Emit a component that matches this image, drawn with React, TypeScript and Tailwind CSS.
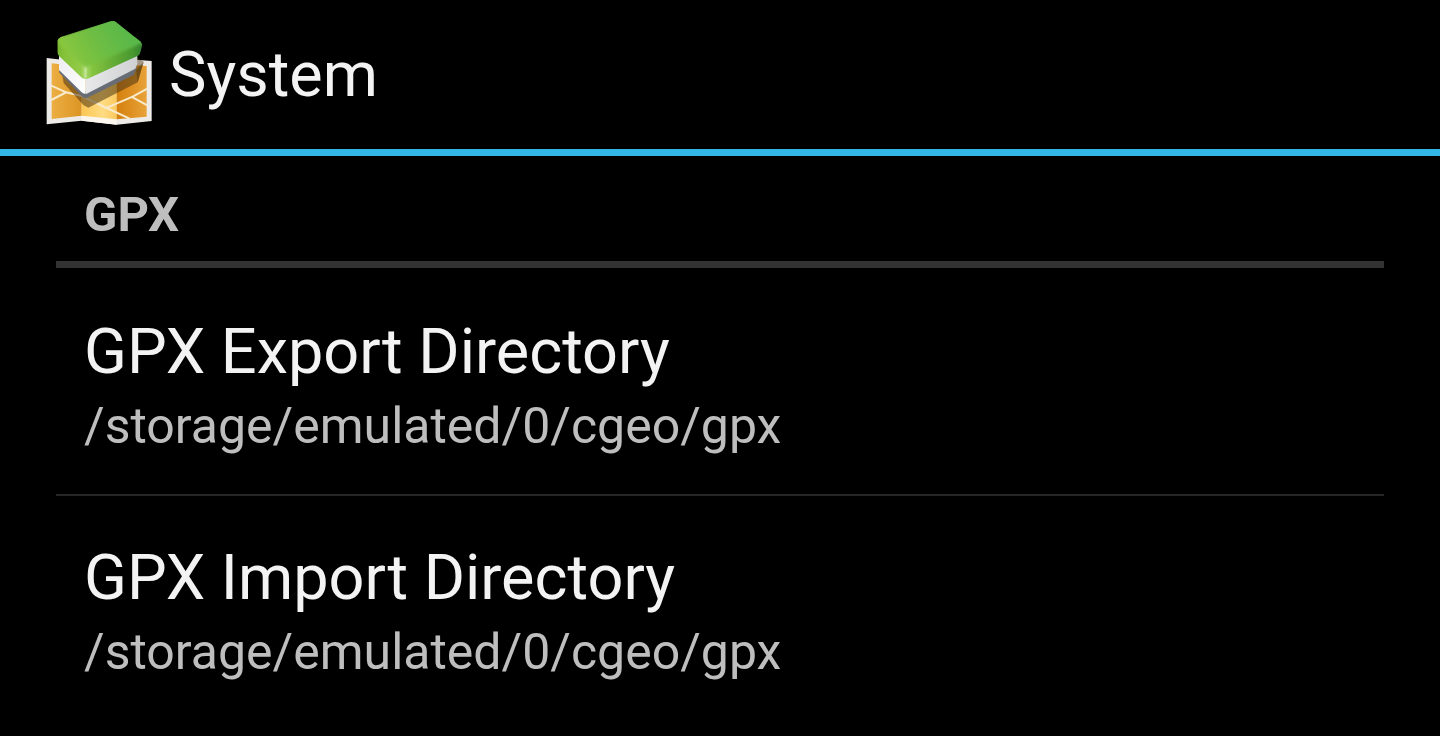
const directories = [
  { title: "GPX Export Directory", path: "/storage/emulated/0/cgeo/gpx" },
  { title: "GPX Import Directory", path: "/storage/emulated/0/cgeo/gpx" },
];

function AppIcon() {
  return (
    <svg viewBox="30 12 330 363" className="h-[121px] w-[110px] shrink-0" aria-hidden="true">
      <defs>
        <linearGradient id="mapLeft" x1="0" y1="0" x2="1" y2="0">
          <stop offset="0" stopColor="#ecae42" />
          <stop offset="1" stopColor="#dc9524" />
        </linearGradient>
        <linearGradient id="mapMid" x1="0" y1="0" x2="1" y2="0">
          <stop offset="0" stopColor="#fbc652" />
          <stop offset="0.6" stopColor="#ffdc82" />
          <stop offset="1" stopColor="#fac95e" />
        </linearGradient>
        <linearGradient id="mapRight" x1="0" y1="0" x2="1" y2="0">
          <stop offset="0" stopColor="#d5800f" />
          <stop offset="1" stopColor="#e8a238" />
        </linearGradient>
        <linearGradient id="lidTop" gradientUnits="userSpaceOnUse" x1="90" y1="150" x2="260" y2="50">
          <stop offset="0" stopColor="#8cc83d" />
          <stop offset="0.5" stopColor="#70be43" />
          <stop offset="1" stopColor="#5ab848" />
        </linearGradient>
        <linearGradient id="lidLeft" x1="0" y1="0" x2="1" y2="0">
          <stop offset="0" stopColor="#74b32c" />
          <stop offset="0.25" stopColor="#84c139" />
          <stop offset="0.85" stopColor="#93cb48" />
          <stop offset="1" stopColor="#b5df80" />
        </linearGradient>
        <linearGradient id="lidRight" x1="0" y1="0" x2="1" y2="0">
          <stop offset="0" stopColor="#a9d96f" />
          <stop offset="0.12" stopColor="#86c440" />
          <stop offset="0.45" stopColor="#66ae37" />
          <stop offset="0.8" stopColor="#4a992f" />
          <stop offset="1" stopColor="#328030" />
        </linearGradient>
        <linearGradient id="boxLeft" x1="0" y1="0" x2="1" y2="1">
          <stop offset="0" stopColor="#ededf0" />
          <stop offset="1" stopColor="#ffffff" />
        </linearGradient>
        <linearGradient id="boxRight" x1="0" y1="0" x2="1" y2="0">
          <stop offset="0" stopColor="#e8e8ea" />
          <stop offset="1" stopColor="#cfd1d3" />
        </linearGradient>
        <filter id="iconSoft" x="-10%" y="-10%" width="120%" height="120%">
          <feGaussianBlur stdDeviation="1.6" />
        </filter>
        <filter id="edgeSoft" x="-10%" y="-10%" width="120%" height="120%">
          <feGaussianBlur stdDeviation="4" />
        </filter>
        <clipPath id="lidShape">
          <path d="M67 87 L76 80 L223 34 Q232 30 240 36 L314 95 L319 104 L313 127 Q312 134 306 137 L155 206 Q142 210 136 202 L69 138 Q64 132 64 126 V92Z" />
        </clipPath>
      </defs>
      <g filter="url(#iconSoft)">
        <path d="M32 144 L137 156 L242 145 L347 153 V333 L242 344 L137 332 L32 343Z" fill="#edebe7" />
        <path d="M137 156 L242 145 V344 L137 332Z" fill="#fbf7ee" />
        <path d="M47 160 L137 170 V317 L47 327Z" fill="url(#mapLeft)" />
        <path d="M137 170 L242 160 V328 L137 317Z" fill="url(#mapMid)" />
        <path d="M242 160 L332 168 V320 L242 328Z" fill="url(#mapRight)" />
        <g fill="none" stroke="#f9eacb" strokeWidth="6">
          <path d="M46 227 L90 247 L137 258 L212 294 L281 326" />
          <path d="M46 270 L92 246" />
          <path d="M206 296 L290 260 L334 236" />
          <path d="M286 260 L334 286" />
        </g>
        <path d="M78 190 L145 252 L300 180 L323 156 L305 217 L157 293 L142 285 L83 219Z" fill="#4c3510" fillOpacity="0.55" />
        <path d="M300 140 L323 155 L305 217 L300 180Z" fill="#4c3510" fillOpacity="0.45" />
        <path d="M69 165 L70 188 L139 260 Q146 267 154 263 L293 195 L304 170 L148 244Z" fill="#676d75" />
        <path d="M69 133 L148 202 V251 Q142 252 137 247 L69 180Z" fill="url(#boxLeft)" />
        <path d="M148 202 L304 133 V162 L298 176 L152 251 L148 251Z" fill="url(#boxRight)" />
        <g clipPath="url(#lidShape)">
          <path d="M60 80 H148 V212 H60Z" fill="url(#lidLeft)" />
          <path d="M148 80 H322 V212 H148Z" fill="url(#lidRight)" />
          <path
            d="M62 82 L223 26 L244 26 L326 96 L314 101 L160 168 Q149 174 141 167 L70 102Z"
            fill="url(#lidTop)"
            filter="url(#edgeSoft)"
          />
          <path d="M149 176 V199" fill="none" stroke="#bfe394" strokeWidth="7" strokeLinecap="round" />
        </g>
      </g>
    </svg>
  );
}

export default function App() {
  return (
    <div className="min-h-screen bg-black font-[Roboto,sans-serif] text-[#f3f3f3]">
      <header className="flex h-[156px] items-center gap-[13px] border-b-7 border-[#33b5e5] pl-[46px]">
        <AppIcon />
        <h1 className="text-[63px] leading-[74px]">System</h1>
      </header>
      <main className="px-14">
        <h2 className="border-b-7 border-[#333333] px-7 pt-[26px] pb-[13px] text-[49px] leading-[66px] font-bold text-[#bebebe]">
          GPX
        </h2>
        <ul className="divide-y-2 divide-[#262626] pt-0.5">
          {directories.map((directory) => (
            <li key={directory.title}>
              <button type="button" className="block w-full px-7 pt-10 pb-9 text-left">
                <span className="block text-[63px] leading-[84px]">{directory.title}</span>
                <span className="block text-[50px] leading-[64px] text-[#bebebe]">{directory.path}</span>
              </button>
            </li>
          ))}
        </ul>
      </main>
    </div>
  );
}
